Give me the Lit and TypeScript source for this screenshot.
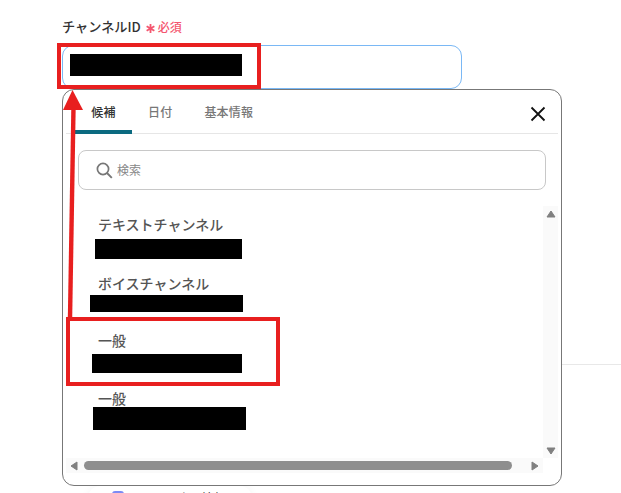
import { LitElement, html, css } from "lit";
import { customElement } from "lit/decorators.js";

const rows = [
  { name: "テキストチャンネル", cls: "r1" },
  { name: "ボイスチャンネル", cls: "r2" },
  { name: "一般", cls: "r3" },
  { name: "一般", cls: "r4" },
];

@customElement("app-root")
export class AppRoot extends LitElement {
  static styles = css`
    :host {
      display: block;
      position: relative;
      width: 621px;
      height: 493px;
      overflow: hidden;
      background: #fff;
      font-family: "Noto Sans CJK JP", "Noto Sans", sans-serif;
      color: #333;
    }
    .page { padding: 18px 0 0 62px; }
    .label { display: flex; align-items: center; height: 18px; gap: 5px; font-size: 13.2px; font-weight: 500; line-height: 18px; color: #333; }
    .label .req { display: flex; align-items: center; gap: 3px; font-size: 12px; color: #f4566f; font-weight: 500; }
    .label .star { width: 9px; height: 9px; margin-top: 3px; }
    .input { box-sizing: border-box; width: 400px; height: 44px; margin-top: 9px; border: 1px solid #7ab8f5; border-radius: 11px; padding: 8px 0 0 7px; }
    .input .redact { width: 172px; height: 22px; }
    .rule { height: 1px; background: #e8e8e8; margin: 275px 0 0 0; }
    .peek { width: 164px; height: 30px; margin: 121px 0 0 26px; border-radius: 12px; box-shadow: 0 0 8px rgba(0,0,0,.05); display: flex; align-items: flex-start; gap: 18px; padding: 5px 0 0 24px; box-sizing: border-box; font-size: 12px; color: #333; line-height: 14px; }
    .peek .ic { width: 12px; height: 12px; border-radius: 3px; background: #7c8af5; flex: none; }

    .popup { position: absolute; left: 62px; top: 89px; box-sizing: border-box; width: 500px; height: 397px; background: #fff; border: 1px solid #777; border-radius: 12px; display: flex; flex-direction: column; padding: 0 3px; }
    .tabs { box-sizing: border-box; display: flex; align-items: stretch; height: 44px; border-bottom: 1px solid #e6e6e6; flex: none; position: relative; }
    .tab { display: flex; align-items: center; justify-content: center; font-size: 12px; letter-spacing: .2px; color: #777; font-weight: 500; padding-bottom: 1px; box-sizing: border-box; }
    .tab.active { width: 57px; margin-left: 9px; color: #333; border-bottom: 4px solid #0b6a80; border-radius: 4px 4px 0 0; margin-bottom: -1px; padding-top: 3px; padding-bottom: 0; }
    .tab.t2 { margin-left: 16px; }
    .tab.t3 { margin-left: 32px; }
    .close { margin-left: auto; margin-right: 12px; align-self: center; width: 16px; height: 16px; margin-top: 4px; }
    .search { box-sizing: border-box; height: 40px; margin: 16px 12px 0 12px; border: 1px solid #c8c8c8; border-radius: 8px; display: flex; align-items: center; padding-left: 17px; gap: 4px; font-size: 12px; color: #888; flex: none; }
    .search svg { width: 17px; height: 17px; }
    .search span { margin-bottom: 1px; }
    .body { flex: 1; display: grid; grid-template-columns: 1fr 15px; grid-template-rows: 1fr 15px; margin-top: 16px; margin-bottom: 12px; min-height: 0; }
    .list { padding: 9px 0 0 32px; position: relative; }
    .item { display: block; }
    .item .nm { font-size: 14px; font-weight: 500; color: #555; line-height: 18px; }
    .redact { background: #000; display: block; }
    .r1 { margin-left: -3px; width: 147px; height: 20px; margin-top: 6px; }
    .r2 { margin-left: -8px; width: 153px; height: 17px; margin-top: 3px; }
    .r3 { margin-left: -6px; width: 150px; height: 19px; margin-top: 5px; }
    .r4 { margin-left: -5px; width: 153px; height: 23px; margin-top: 0; }
    .item.i2 { margin-top: 15px; }
    .item.i3 { margin-top: 19px; }
    .item.i4 { margin-top: 16px; }
    .vbar { background: #fafafa; display: flex; flex-direction: column; justify-content: space-between; align-items: center; padding: 4px 0 3px; box-sizing: border-box; }
    .hbar { background: #fafafa; display: flex; align-items: center; padding-left: 4px; }
    .thumb { width: 428px; height: 9px; border-radius: 5px; background: #8e8e8e; margin-left: 6px; }
    .arrow { display: block; }
    .arrow.right { margin-left: 19px; }

    .mark { position: absolute; box-sizing: border-box; border: 4px solid #e81f1f; pointer-events: none; }
    .m1 { left: 57px; top: 43px; width: 204px; height: 46px; }
    .m2 { left: 66px; top: 317px; width: 214px; height: 69px; }
    .pointer { position: absolute; left: 55px; top: 85px; width: 40px; height: 240px; pointer-events: none; }
  `;

  render() {
    return html`
      <div class="page">
        <div class="label">
          <span>チャンネルID</span>
          <span class="req">
            <svg class="star" viewBox="0 0 10 10"><path d="M5 0v10M.7 2.5l8.6 5M9.3 2.5l-8.6 5" stroke="#f4566f" stroke-width="2" fill="none"/></svg>
            必須
          </span>
        </div>
        <div class="input"><span class="redact"></span></div>
        <div class="rule"></div>
        <div class="peek"><span class="ic"></span><span>チャンネル情報</span></div>
      </div>

      <div class="popup">
        <div class="tabs">
          <div class="tab active">候補</div>
          <div class="tab t2">日付</div>
          <div class="tab t3">基本情報</div>
          <svg class="close" viewBox="0 0 16 16"><path d="M1.5 1.5l13 13M14.5 1.5l-13 13" stroke="#111" stroke-width="1.8" fill="none"/></svg>
        </div>
        <div class="search">
          <svg viewBox="0 0 17 17"><circle cx="7" cy="7" r="5.6" stroke="#777" stroke-width="1.7" fill="none"/><path d="M11 11l4.8 4.8" stroke="#777" stroke-width="1.9" fill="none"/></svg>
          <span>検索</span>
        </div>
        <div class="body">
          <div class="list">
            ${rows.map(
              (r, i) => html`<div class="item i${i + 1}">
                <div class="nm">${r.name}</div>
                <span class="redact ${r.cls}"></span>
              </div>`
            )}
          </div>
          <div class="vbar">
            <svg class="arrow" width="10" height="8" viewBox="0 0 10 8"><path d="M5 1L9 7H1z" fill="#808080" stroke="#808080" stroke-linejoin="round"/></svg>
            <svg class="arrow" width="10" height="8" viewBox="0 0 10 8"><path d="M5 7L9 1H1z" fill="#808080" stroke="#808080" stroke-linejoin="round"/></svg>
          </div>
          <div class="hbar">
            <svg class="arrow" width="8" height="10" viewBox="0 0 8 10"><path d="M1 5L7 1V9z" fill="#808080" stroke="#808080" stroke-linejoin="round"/></svg>
            <div class="thumb"></div>
            <svg class="arrow right" width="8" height="10" viewBox="0 0 8 10"><path d="M7 5L1 1V9z" fill="#808080" stroke="#808080" stroke-linejoin="round"/></svg>
          </div>
          <div></div>
        </div>
      </div>

      <div class="mark m1"></div>
      <div class="mark m2"></div>
      <svg class="pointer" viewBox="0 0 40 240"><path d="M15 234L18.5 22" stroke="#e81f1f" stroke-width="4.4" fill="none"/><path d="M17.5 5L28 25H8z" fill="#e81f1f"/></svg>
    `;
  }
}
